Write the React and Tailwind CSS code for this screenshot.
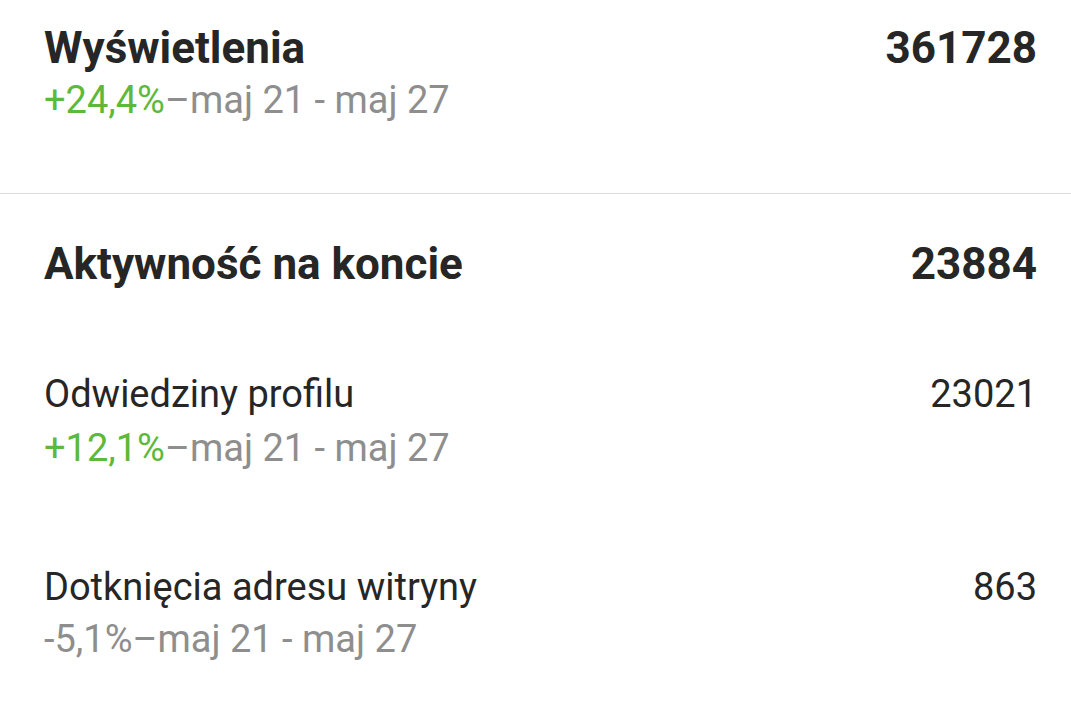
export default function App() {
  const font = { fontFamily: "Roboto, 'Noto Sans', sans-serif" };
  return (
    <div className="w-[1071px] h-[706px] bg-white overflow-hidden text-[#262626]" style={font}>
      <div className="pl-[44px] pr-[34px] pt-[22px] pb-[66px] border-b border-[#dbdbdb]">
        <div className="flex justify-between text-[44px] leading-[52px] font-bold">
          <span>Wyświetlenia</span>
          <span>361728</span>
        </div>
        <div className="text-[38px] leading-[53px] text-[#8e8e8e]">
          <span className="text-[#5db93d]">+24,4%</span>–maj 21 - maj 27
        </div>
      </div>

      <div className="pl-[44px] pr-[34px] pt-[44px]">
        <div className="flex justify-between text-[44px] leading-[52px] font-bold">
          <span>Aktywność na koncie</span>
          <span>23884</span>
        </div>

        <div className="mt-[77px]">
          <div className="flex justify-between text-[38px] leading-[54px]">
            <span>Odwiedziny profilu</span>
            <span>23021</span>
          </div>
          <div className="text-[38px] leading-[54px] text-[#8e8e8e]">
            <span className="text-[#5db93d]">+12,1%</span>–maj 21 - maj 27
          </div>
        </div>

        <div className="mt-[86px]">
          <div className="flex justify-between text-[38px] leading-[52px]">
            <span>Dotknięcia adresu witryny</span>
            <span>863</span>
          </div>
          <div className="text-[38px] leading-[52px] text-[#8e8e8e]">
            <span>-5,1%</span>–maj 21 - maj 27
          </div>
        </div>
      </div>
    </div>
  );
}
